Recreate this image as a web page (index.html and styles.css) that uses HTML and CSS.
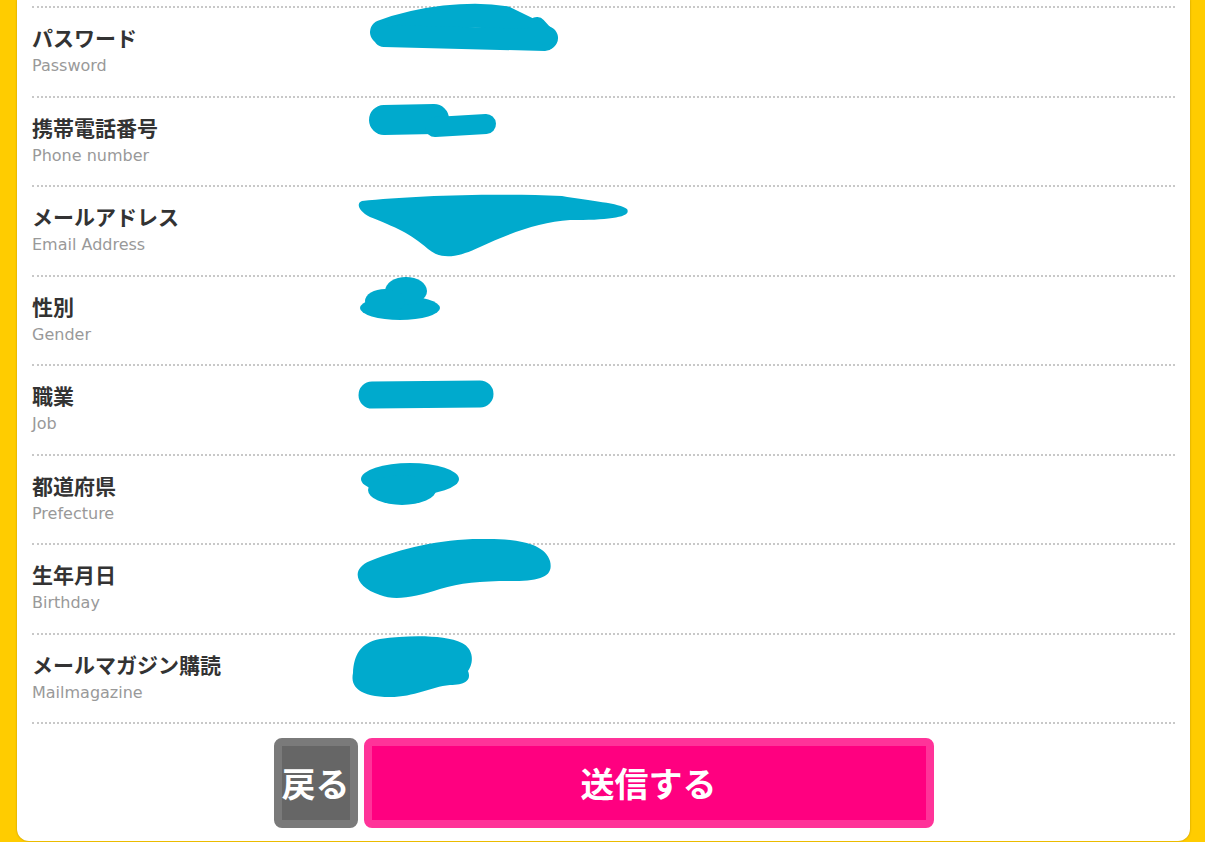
FILE: index.html
```html
<!DOCTYPE html>
<html lang="ja">
<head>
<meta charset="utf-8">
<title>Form confirm</title>
<link rel="stylesheet" href="styles.css">
</head>
<body>
<div class="panel">
  <div class="rows">
    <div class="row">
      <div class="label"><div class="ja">パスワード</div><div class="en">Password</div></div>
      <svg class="blot" viewBox="0 0 320 88" width="320" height="88"><g fill="none" stroke="#00aacd" stroke-linecap="round" stroke-linejoin="round"><path d="M42,24 C80,10 130,4 165,10 L206,30" stroke-width="24"/><path d="M44,28 L205,32" stroke-width="22"/><path d="M197,18 L206,28" stroke-width="18"/></g></svg>
    </div>
    <div class="row">
      <div class="label"><div class="ja">携帯電話番号</div><div class="en">Phone number</div></div>
      <svg class="blot" viewBox="0 0 320 88" width="320" height="88"><g fill="none" stroke="#00aacd" stroke-linecap="round" stroke-linejoin="round"><path d="M44,22 L94,21" stroke-width="30"/><path d="M95,29 L146,26" stroke-width="20"/></g></svg>
    </div>
    <div class="row">
      <div class="label"><div class="ja">メールアドレス</div><div class="en">Email Address</div></div>
      <svg class="blot" viewBox="0 0 320 88" width="320" height="88"><path fill="#00aacd" d="M22,14 C70,9 150,6 222,9 C250,14 280,16 287,22 C292,30 270,33 230,33 C200,35 170,46 140,60 C115,72 100,72 88,62 C70,46 55,40 30,30 C18,24 16,16 22,14 Z"/></svg>
    </div>
    <div class="row">
      <div class="label"><div class="ja">性別</div><div class="en">Gender</div></div>
      <svg class="blot" viewBox="0 0 320 88" width="320" height="88"><g fill="#00aacd"><ellipse cx="60" cy="31" rx="40" ry="12"/><ellipse cx="66" cy="14" rx="21" ry="14"/><ellipse cx="45" cy="24" rx="20" ry="12"/></g></svg>
    </div>
    <div class="row">
      <div class="label"><div class="ja">職業</div><div class="en">Job</div></div>
      <svg class="blot" viewBox="0 0 320 88" width="320" height="88"><g fill="none" stroke="#00aacd" stroke-linecap="round"><path d="M32,29 L140,28" stroke-width="27"/></g></svg>
    </div>
    <div class="row">
      <div class="label"><div class="ja">都道府県</div><div class="en">Prefecture</div></div>
      <svg class="blot" viewBox="0 0 320 88" width="320" height="88"><g fill="#00aacd"><ellipse cx="70" cy="23" rx="49" ry="16"/><ellipse cx="62" cy="34" rx="34" ry="15"/></g></svg>
    </div>
    <div class="row">
      <div class="label"><div class="ja">生年月日</div><div class="en">Birthday</div></div>
      <svg class="blot" viewBox="0 0 320 88" width="320" height="88"><path fill="#00aacd" d="M30,16 C60,4 100,-6 140,-6 C175,-7 205,-2 210,16 C214,32 200,36 170,36 C140,36 120,38 100,44 C75,52 55,56 40,50 C15,42 10,24 30,16 Z"/></svg>
    </div>
    <div class="row">
      <div class="label"><div class="ja">メールマガジン購読</div><div class="en">Mailmagazine</div></div>
      <svg class="blot" viewBox="0 0 320 88" width="320" height="88"><path fill="#00aacd" d="M40,4 C70,0 105,0 122,8 C134,14 134,28 128,36 C132,46 124,50 110,50 C90,52 75,62 50,62 C20,62 10,52 13,38 C14,20 20,8 40,4 Z"/></svg>
    </div>
  </div>
  <div class="actions">
    <button class="btn btn-back" type="button">戻る</button>
    <button class="btn btn-send" type="submit">送信する</button>
  </div>
</div>
</body>
</html>
```

FILE: styles.css
```css
html, body {
  margin: 0;
  padding: 0;
}
body {
  background: #ffcc00;
  font-family: "Noto Sans CJK JP", "Noto Sans", sans-serif;
  padding-bottom: 1px;
}
.panel {
  margin: 0 15px 0 17px;
  background: #fff;
  border-radius: 0 0 12px 12px;
  box-shadow: 0 0 2px rgba(120, 90, 0, 0.55);
  padding: 6px 15px 13px 15px;
  overflow: hidden;
}
.rows {
  border-bottom: 2px dotted #c8c8c8;
}
.row {
  display: grid;
  grid-template-columns: 308px 1fr;
  border-top: 2px dotted #c8c8c8;
  height: 87.5px;
}
.label {
  padding-top: 14px;
}
.ja {
  font-size: 21px;
  font-weight: 700;
  color: #333;
  line-height: 30px;
}
.en {
  font-family: "DejaVu Sans", "Noto Sans", sans-serif;
  font-size: 16px;
  color: #999;
  line-height: 28px;
}
.blot {
  display: block;
  overflow: visible;
}
.actions {
  display: flex;
  justify-content: center;
  gap: 6px;
  margin-top: 14px;
}
.btn {
  height: 90px;
  border-style: solid;
  border-width: 8px;
  border-radius: 8px;
  color: #fff;
  font-family: "Noto Sans CJK JP", sans-serif;
  font-weight: 700;
  font-size: 34px;
  padding: 0;
  display: flex;
  align-items: center;
  justify-content: center;
  white-space: nowrap;
  line-height: 1;
}
.btn-back {
  width: 84px;
  background: #666;
  border-color: #7a7a7a;
  overflow: visible;
}
.btn-send {
  width: 570px;
  background: #ff0080;
  border-color: #ff3399;
}
```
